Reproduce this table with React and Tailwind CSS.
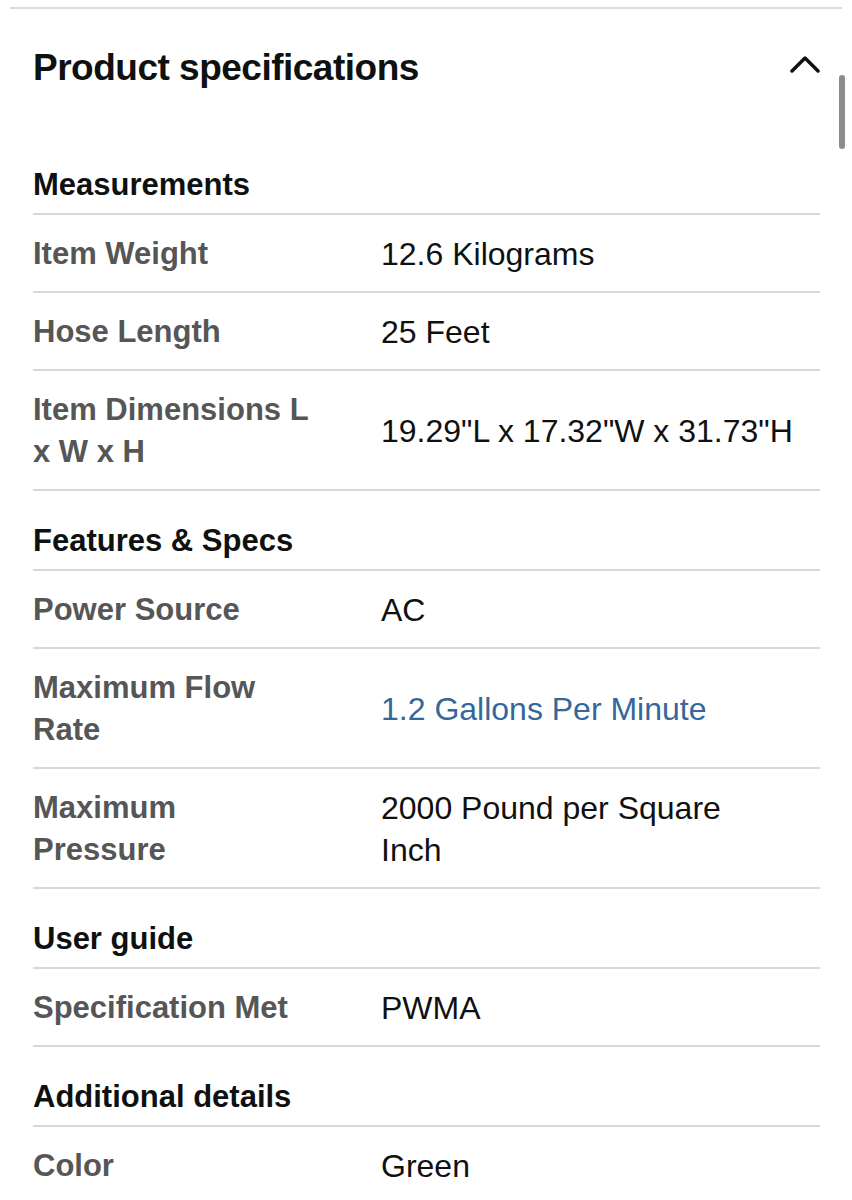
import React from 'react'

const sections = [
  {
    title: 'Measurements',
    rows: [
      { label: 'Item Weight', value: '12.6 Kilograms' },
      { label: 'Hose Length', value: '25 Feet' },
      { label: 'Item Dimensions L x W x H', value: '19.29"L x 17.32"W x 31.73"H', nowrap: true },
    ],
  },
  {
    title: 'Features & Specs',
    rows: [
      { label: 'Power Source', value: 'AC' },
      { label: 'Maximum Flow Rate', value: '1.2 Gallons Per Minute', link: true },
      { label: 'Maximum Pressure', value: '2000 Pound per Square Inch' },
    ],
  },
  {
    title: 'User guide',
    rows: [{ label: 'Specification Met', value: 'PWMA' }],
  },
  {
    title: 'Additional details',
    rows: [{ label: 'Color', value: 'Green' }],
  },
]

function SpecRow({ row }) {
  return (
    <div className="flex items-center pt-[18px] pb-[16px] border-b-2 border-[#d8d8d8]">
      <div className="w-[348px] shrink-0">
        <div className="max-w-[280px] text-[31px] leading-[42px] font-bold text-[#565656]">
          {row.label}
        </div>
      </div>
      <div
        className={`max-w-[400px] text-[32px] leading-[42px] ${
          row.link ? 'text-[#35679a]' : 'text-[#0f1111]'
        } ${row.nowrap ? 'whitespace-nowrap' : ''}`}
      >
        {row.value}
      </div>
    </div>
  )
}

export default function App() {
  return (
    <div
      className="relative w-[852px] min-h-[1200px] bg-white overflow-hidden"
      style={{ fontFamily: '"Liberation Sans", Arial, sans-serif' }}
    >
      <div className="mx-[10px] mt-[7px] border-t-2 border-[#dcdcdc]" />

      <div className="pl-[33px] pr-[32px]">
        <div className="flex items-start justify-between pt-[37px]">
          <h2 className="text-[37px] leading-[44px] font-bold text-[#0f1111] tracking-[-0.5px]">
            Product specifications
          </h2>
          <svg width="32" height="18" viewBox="0 0 32 18" className="mt-[9px] -mr-[1px]" aria-hidden="true">
            <polyline points="3,16 16,3 29,16" fill="none" stroke="#0f1111" strokeWidth="3.5" strokeLinecap="round" strokeLinejoin="round" />
          </svg>
        </div>

        <div className="mt-[74px]">
          {sections.map((s, i) => (
            <div key={s.title}>
              <div className={`${i === 0 ? '' : 'pt-[29px]'} pb-[7px] border-b-2 border-[#d8d8d8]`}>
                <h3 className="text-[31px] leading-[42px] font-bold text-[#0f1111]">{s.title}</h3>
              </div>
              {s.rows.map((r) => (
                <SpecRow key={r.label} row={r} />
              ))}
            </div>
          ))}
        </div>
      </div>

      {/* scrollbar */}
      <div className="absolute left-[839px] top-[75px] w-[6px] h-[74px] rounded-full bg-[#8c8c8c]" />
    </div>
  )
}
